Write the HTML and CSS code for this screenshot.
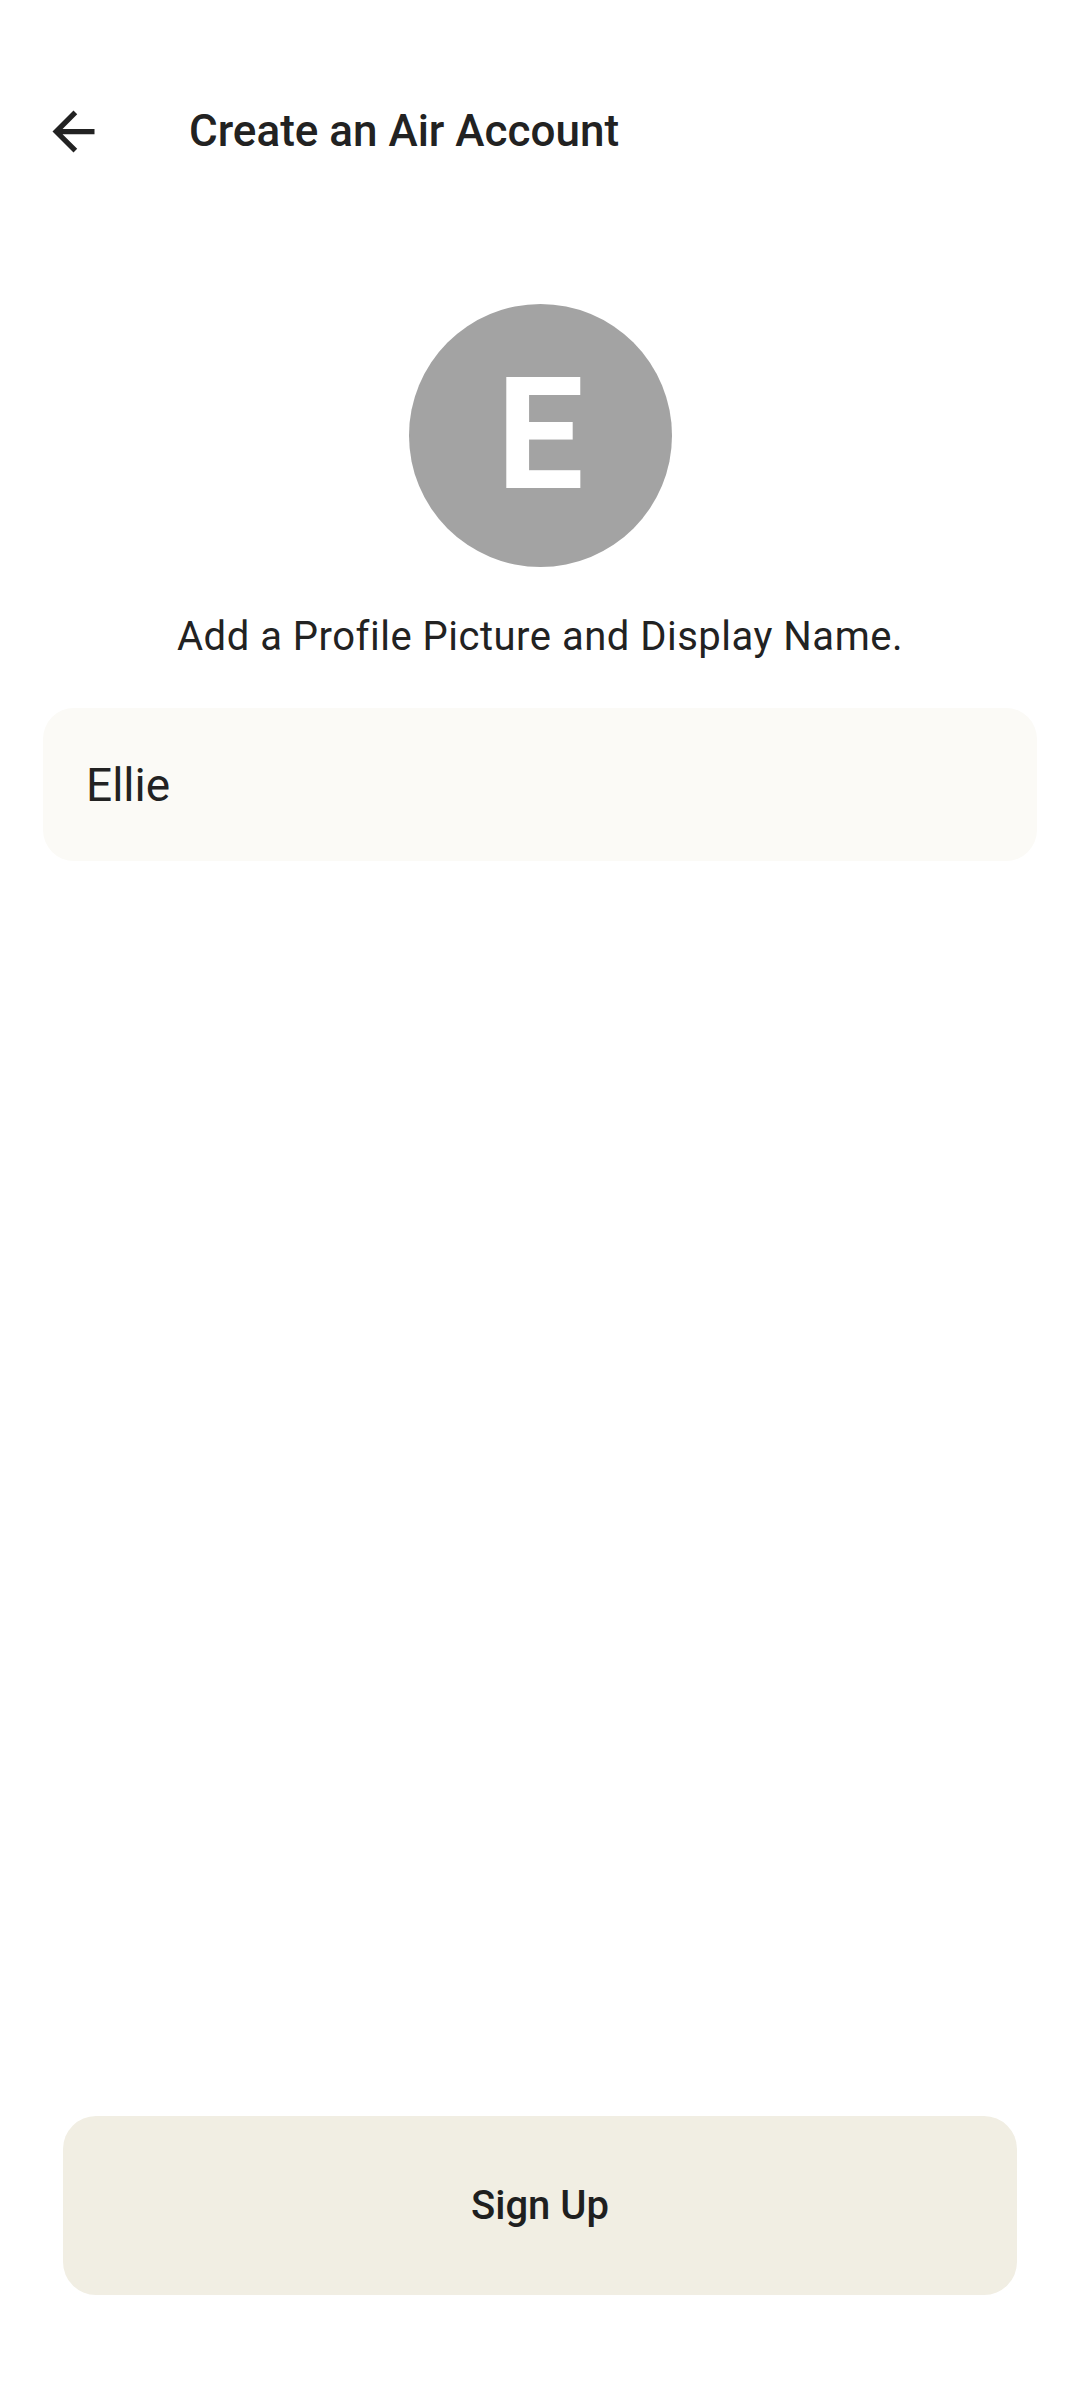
FILE: index.html
```html
<!DOCTYPE html>
<html>
<head>
<meta charset="utf-8">
<link rel="stylesheet" href="styles.css">
</head>
<body>
<div class="screen">
  <header class="topbar">
    <button class="back" aria-label="Back">
      <svg viewBox="0 0 24 24" width="63" height="63"><path d="M20 11H7.83l5.59-5.59L12 4l-8 8 8 8 1.41-1.41L7.83 13H20v-2z" fill="#222"/></svg>
    </button>
    <h1 class="title">Create an Air Account</h1>
  </header>
  <div class="avatar"><span>E</span></div>
  <p class="hint">Add a Profile Picture and Display Name.</p>
  <div class="field"><span class="field-text">Ellie</span></div>
  <div class="spacer"></div>
  <button class="signup">Sign Up</button>
</div>
</body>
</html>
```
FILE: styles.css
```css
html, body {
  margin: 0;
  padding: 0;
  background: #ffffff;
}
body {
  font-family: Roboto, "Noto Sans", sans-serif;
  color: #1f1f1f;
}
.screen {
  width: 1080px;
  height: 2400px;
  display: flex;
  flex-direction: column;
  box-sizing: border-box;
}
.topbar {
  display: flex;
  align-items: center;
  height: 148px;
  margin-top: 57px;
  padding-left: 42px;
}
.back {
  border: 0;
  background: none;
  padding: 0;
  width: 63px;
  height: 63px;
  display: flex;
}
.title {
  margin: 0 0 0 84px;
  font-size: 44px;
  font-weight: 500;
  color: #222;
  letter-spacing: 0;
}
.avatar {
  align-self: center;
  margin-top: 99px;
  width: 263px;
  height: 263px;
  border-radius: 50%;
  background: #a3a3a3;
  display: flex;
  align-items: center;
  justify-content: center;
}
.avatar span {
  color: #ffffff;
  font-size: 155px;
  font-weight: 700;
  line-height: 1;
}
.hint {
  margin: 44px 0 0;
  text-align: center;
  font-size: 40px;
  line-height: 52px;
  color: #222;
  letter-spacing: 0.5px;
}
.field {
  margin: 45px 43px 0;
  height: 153px;
  border-radius: 31px;
  background: #fbfaf6;
  display: flex;
  align-items: center;
  padding-left: 43px;
}
.field-text {
  font-size: 46px;
  color: #222;
}
.spacer {
  flex: 1;
}
.signup {
  margin: 0 63px 105px;
  height: 179px;
  border: 0;
  border-radius: 33px;
  background: #f1eee3;
  font-family: Roboto, sans-serif;
  font-size: 40px;
  font-weight: 500;
  color: #1f1f1f;
}
```
